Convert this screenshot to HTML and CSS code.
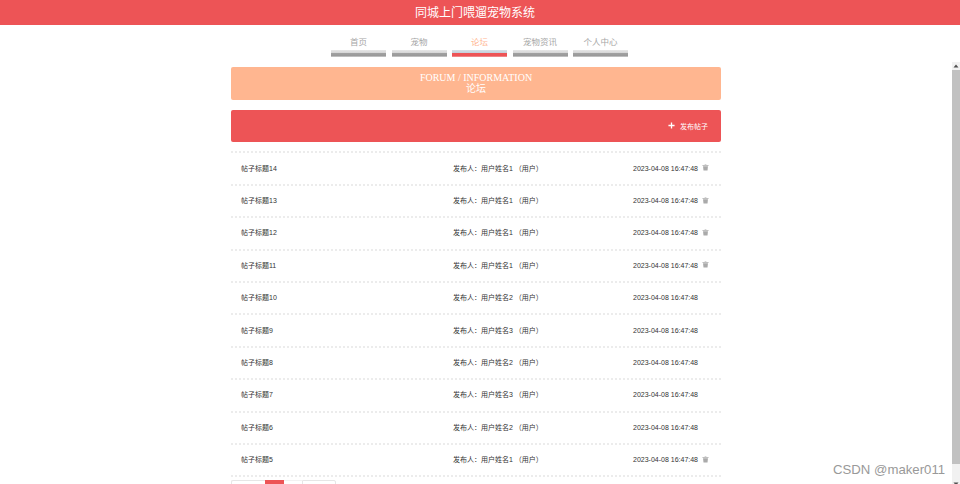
FILE: index.html
```html
<!DOCTYPE html>
<html lang="zh">
<head>
<meta charset="utf-8">
<title>同城上门喂遛宠物系统</title>
<link rel="stylesheet" href="styles.css">
</head>
<body>
<header class="top"><h1 class="top-title">同城上门喂遛宠物系统</h1></header>
<nav class="nav">
  <a class="nav-item">首页</a>
  <a class="nav-item">宠物</a>
  <a class="nav-item active">论坛</a>
  <a class="nav-item">宠物资讯</a>
  <a class="nav-item">个人中心</a>
</nav>
<main class="main">
  <section class="banner">
    <div>FORUM / INFORMATION</div>
    <div>论坛</div>
  </section>
  <section class="toolbar">
    <a class="publish">
      <svg class="plus" viewBox="0 0 8 8"><path d="M4 0.5V7.5M0.5 4H7.5"/></svg>
      <span>发布帖子</span>
    </a>
  </section>
  <ul class="list">
    <li class="row"><span>帖子标题14</span><span>发布人：用户姓名1 （用户）</span><span>2023-04-08 16:47:48</span><svg class="trash" viewBox="0 0 8 8"><path d="M3 0.5H5V1.2H7.5V2H0.5V1.2H3ZM1.2 2.6H6.8L6.3 7.5H1.7Z"/></svg></li>
    <li class="row"><span>帖子标题13</span><span>发布人：用户姓名1 （用户）</span><span>2023-04-08 16:47:48</span><svg class="trash" viewBox="0 0 8 8"><path d="M3 0.5H5V1.2H7.5V2H0.5V1.2H3ZM1.2 2.6H6.8L6.3 7.5H1.7Z"/></svg></li>
    <li class="row"><span>帖子标题12</span><span>发布人：用户姓名1 （用户）</span><span>2023-04-08 16:47:48</span><svg class="trash" viewBox="0 0 8 8"><path d="M3 0.5H5V1.2H7.5V2H0.5V1.2H3ZM1.2 2.6H6.8L6.3 7.5H1.7Z"/></svg></li>
    <li class="row"><span>帖子标题11</span><span>发布人：用户姓名1 （用户）</span><span>2023-04-08 16:47:48</span><svg class="trash" viewBox="0 0 8 8"><path d="M3 0.5H5V1.2H7.5V2H0.5V1.2H3ZM1.2 2.6H6.8L6.3 7.5H1.7Z"/></svg></li>
    <li class="row"><span>帖子标题10</span><span>发布人：用户姓名2 （用户）</span><span>2023-04-08 16:47:48</span></li>
    <li class="row"><span>帖子标题9</span><span>发布人：用户姓名3 （用户）</span><span>2023-04-08 16:47:48</span></li>
    <li class="row"><span>帖子标题8</span><span>发布人：用户姓名2 （用户）</span><span>2023-04-08 16:47:48</span></li>
    <li class="row"><span>帖子标题7</span><span>发布人：用户姓名3 （用户）</span><span>2023-04-08 16:47:48</span></li>
    <li class="row"><span>帖子标题6</span><span>发布人：用户姓名2 （用户）</span><span>2023-04-08 16:47:48</span></li>
    <li class="row"><span>帖子标题5</span><span>发布人：用户姓名1 （用户）</span><span>2023-04-08 16:47:48</span><svg class="trash" viewBox="0 0 8 8"><path d="M3 0.5H5V1.2H7.5V2H0.5V1.2H3ZM1.2 2.6H6.8L6.3 7.5H1.7Z"/></svg></li>
  </ul>
  <div class="pager">
    <span class="page page-prev"></span>
    <span class="page page-on"></span>
    <span class="page page-num"></span>
    <span class="page page-next"></span>
  </div>
</main>
<div class="scrollbar">
  <svg class="sb-arrow" viewBox="0 0 8 8"><path d="M4 2.5L6.5 5.5H1.5Z"/></svg>
  <div class="sb-thumb"></div>
  <svg class="sb-arrow" viewBox="0 0 8 8"><path d="M4 5.5L6.5 2.5H1.5Z"/></svg>
</div>
<div class="watermark">CSDN @maker011</div>
</body>
</html>
```
FILE: styles.css
```css
* { box-sizing: border-box; }
html, body { margin: 0; padding: 0; height: 484px; overflow: hidden; background: #fff; }
body { font-family: "Liberation Sans", "Noto Sans CJK SC", sans-serif; color: #333; position: relative; }

.top { height: 25px; background: #ed5456; padding: 1px 10px 0 0; display: flex; align-items: center; justify-content: center; }
.top-title { margin: 0; font-size: 12px; line-height: 24px; font-weight: 400; color: #fff; }

.nav { display: flex; justify-content: center; gap: 5.5px; padding: 10px 1px 0 0; height: 41.6px; }
.nav-item { width: 55px; height: 22px; font-size: 8.5px; line-height: 14px; text-align: center; color: #a6a6a6; background: linear-gradient(#e6e6e6 0, #d6d6d6 40%, #a0a0a0 50%, #999 85%, #e0e0e0 100%) bottom / 100% 7px no-repeat; }
.nav-item.active { color: #ffb690; background-image: linear-gradient(#d8e0e6 0, #c4d0da 40%, #ed5456 50%, #ed5456 85%, #f0b0b0 100%); }

.main { width: 490px; margin-left: 231px; }

.banner { height: 33.4px; background: #ffb690; border-radius: 2px; text-align: center; color: #fff; font-family: "Liberation Serif", "Noto Sans CJK SC", serif; font-size: 10px; line-height: 11px; padding-top: 5px; }

.toolbar { height: 32px; margin-top: 10px; background: #ed5456; border-radius: 2px; display: flex; align-items: center; justify-content: flex-end; padding-right: 13px; }
.publish { display: flex; align-items: center; gap: 5px; color: #fff; font-size: 7px; }
.plus { width: 7px; height: 7px; fill: none; stroke: #fff; stroke-width: 1.5; }

.list { list-style: none; margin: 9.5px 0 0; padding: 0; border-bottom: 2px dotted #ececec; }
.row { height: 32.4px; border-top: 2px dotted #ececec; display: grid; grid-template-columns: 212px 180px 69px 8px; align-items: center; padding: 0 0 0 10px; font-size: 7px; line-height: 10px; color: #333; }
.trash { width: 7px; height: 7px; fill: #aaa; margin-bottom: 2px; }

.pager { display: flex; height: 12px; margin-top: 3px; }
.page { display: block; height: 12px; border: 1px solid #e6e6e6; border-right: 0; }
.page-prev { width: 34px; border-radius: 2px 0 0 0; }
.page-on { width: 19px; background: #ed5456; border-color: #ed5456; }
.page-num { width: 18px; border-top-color: #f2f2f2; border-left: 0; }
.page-next { width: 34px; border-right: 1px solid #e6e6e6; border-radius: 0 2px 0 0; }

.scrollbar { position: absolute; right: 0; top: 62px; width: 8px; height: 426px; background: #f1f1f1; display: flex; flex-direction: column; justify-content: space-between; }
.sb-arrow { width: 8px; height: 8px; fill: #505050; flex: none; }
.sb-thumb { width: 8px; flex: 1; background: #c1c1c1; margin: 0 0 16px; }

.watermark { position: absolute; left: 833px; top: 461px; font-size: 13.2px; line-height: 17px; color: #999; }
```
